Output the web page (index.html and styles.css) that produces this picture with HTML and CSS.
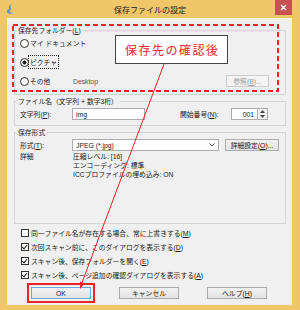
FILE: index.html
```html
<!DOCTYPE html>
<html lang="ja">
<head>
    <meta charset="UTF-8">
    <title>保存ファイルの設定</title>
    <link rel="stylesheet" href="styles.css">
</head>
<body>
    <div class="window">
        <div class="titlebar">
            <svg class="app-icon" width="9" height="11" viewBox="0 0 9 11">
                <path d="M5 0 C3 2 2 3 3.5 4.5 C1.5 5.5 0.5 7 1 8.5 C3 10.5 6 10 8.5 9.5 C6 9 3.5 8.5 3.5 7 C4 6 6 5.5 5 4 C4 3 5 1.5 5 0 Z" fill="#6f8fb8"/>
                <path d="M5 9 C6.5 9.3 7.5 9.3 8.5 9.5" stroke="#b9cbe2" stroke-width="1" fill="none"/>
            </svg>
            <div class="title">保存ファイルの設定</div>
            <div class="close">
                <svg width="7" height="7" viewBox="0 0 7 7"><path d="M1 1 L6 6 M6 1 L1 6" stroke="#fff" stroke-width="1.4"/></svg>
            </div>
        </div>

        <div class="client">
            <div class="group g-folder">
                <div class="group-title">保存先フォルダー(<u>L</u>)</div>
                <div class="opts">
                    <div class="opt"><span class="radio"></span>マイ ドキュメント</div>
                    <div class="opt"><span class="radio on"></span><span class="focus">ピクチャ</span></div>
                    <div class="opt">
                        <span class="radio"></span>
                        <span class="opt-label">その他</span>
                        <span class="path">Desktop</span>
                        <span class="btn btn-browse disabled">参照(<u>B</u>)...</span>
                    </div>
                </div>
            </div>

            <div class="group g-name">
                <div class="group-title">ファイル名（文字列 + 数字3桁）</div>
                <div class="row">
                    <span class="lbl">文字列(<u>P</u>):</span>
                    <span class="field field-text">img</span>
                    <span class="lbl lbl-start">開始番号(<u>N</u>):</span>
                    <span class="field field-num">001</span>
                    <span class="spin">
                        <svg width="5" height="3" viewBox="0 0 5 3"><path d="M2.5 0 L5 3 L0 3 Z" fill="#444"/></svg>
                        <svg width="5" height="3" viewBox="0 0 5 3"><path d="M0 0 L5 0 L2.5 3 Z" fill="#444"/></svg>
                    </span>
                </div>
            </div>

            <div class="group g-format">
                <div class="group-title">保存形式</div>
                <div class="row">
                    <span class="lbl">形式(<u>T</u>):</span>
                    <span class="field field-select">JPEG (*.jpg)
                        <svg width="6" height="4" viewBox="0 0 6 4"><path d="M0.5 0.5 L3 3 L5.5 0.5" stroke="#444" stroke-width="1" fill="none"/></svg>
                    </span>
                    <span class="btn btn-detail">詳細設定(<u>O</u>)...</span>
                </div>
                <div class="details">
                    <span class="lbl">詳細</span>
                    <div class="detail-lines">
                        <div>圧縮レベル: [16]</div>
                        <div>エンコーディング: 標準</div>
                        <div>ICCプロファイルの埋め込み: ON</div>
                    </div>
                </div>
            </div>

            <div class="checks">
                <div class="check"><span class="chk"></span>同一ファイル名が存在する場合、常に上書きする(<u>M</u>)</div>
                <div class="check"><span class="chk on"></span>次回スキャン前に、このダイアログを表示する(<u>D</u>)</div>
                <div class="check"><span class="chk on"></span>スキャン後、保存フォルダーを開く(<u>E</u>)</div>
                <div class="check"><span class="chk on"></span>スキャン後、ページ追加の確認ダイアログを表示する(<u>A</u>)</div>
            </div>

            <div class="buttons">
                <span class="btn btn-main default">OK</span>
                <span class="btn btn-main">キャンセル</span>
                <span class="btn btn-main">ヘルプ(<u>H</u>)</span>
            </div>
        </div>

        <svg class="overlay" width="300" height="310" viewBox="0 0 300 310">
            <rect x="13" y="25" width="265" height="66" fill="none" stroke="#e8262a" stroke-width="2" stroke-dasharray="5 3"/>
            <line x1="164" y1="64" x2="81.5" y2="284" stroke="#e8262a" stroke-width="1"/>
            <polygon points="80,289 84.8,283.3 80.1,281.6" fill="#e8262a"/>
        </svg>
        <div class="callout">保存先の確認後</div>
    </div>
</body>
</html>
```

FILE: styles.css
```css
body {
    margin: 0;
    font-family: "Liberation Sans", "Noto Sans CJK JP", sans-serif;
    font-size: 6.8px;
    color: #1a1a1a;
}
u {
    text-decoration: underline;
}
.window {
    width: 300px;
    height: 310px;
    background: #efc768;
    position: relative;
    display: flex;
    flex-direction: column;
    overflow: hidden;
}
.titlebar {
    height: 18px;
    display: grid;
    grid-template-columns: 1fr auto 1fr;
    align-items: center;
}
.app-icon {
    margin-left: 6px;
}
.title {
    font-family: "Noto Sans CJK JP", sans-serif;
    font-size: 8px;
    color: #222;
}
.close {
    justify-self: end;
    align-self: start;
    width: 17px;
    height: 15px;
    margin-right: 8px;
    background: #c75050;
    display: flex;
    align-items: center;
    justify-content: center;
}
.client {
    flex: 1;
    margin: 0 8px 5px 7px;
    background: #f0f0f0;
    padding: 12px 6px 0 7px;
}
.group {
    border: 1px solid #d5d5d5;
    padding: 0 5px;
}
.group-title {
    margin: -5px 0 0 -4px;
    padding: 0 2px;
    line-height: 9px;
    background: #f0f0f0;
    width: fit-content;
}
.opts {
    display: flex;
    flex-direction: column;
    gap: 7px;
    margin-top: 2px;
    padding-bottom: 7px;
}
.opt {
    display: flex;
    align-items: center;
    height: 12px;
}
.radio {
    width: 9px;
    height: 9px;
    border: 1px solid #333;
    border-radius: 50%;
    background: #fff;
    box-sizing: border-box;
    margin-right: 1px;
    flex: none;
}
.radio.on {
    background: radial-gradient(circle, #222 0 1.8px, #fff 2.3px);
}
.focus {
    outline: 1px dotted #222;
    outline-offset: 1px;
}
.opt-label {
    width: 43px;
}
.path {
    flex: 1;
    color: #555;
}
.btn {
    display: flex;
    align-items: center;
    justify-content: center;
    box-sizing: border-box;
    border: 1px solid #acacac;
    background: linear-gradient(#f2f2f2, #e3e3e3);
    height: 12px;
    white-space: nowrap;
}
.btn.disabled {
    border-color: #cdcdcd;
    background: #f4f4f4;
    color: #9a9a9a;
}
.btn-browse {
    width: 43px;
    margin-right: 11px;
}
.g-name {
    margin-top: 6px;
    padding-bottom: 5px;
}
.g-format {
    margin-top: 6px;
    height: 92px;
    box-sizing: border-box;
}
.row {
    display: flex;
    align-items: center;
    height: 12px;
    margin-top: 2px;
}
.lbl {
    width: 52px;
    flex: none;
}
.lbl-start {
    width: 51px;
    margin-left: 35px;
}
.field {
    height: 12px;
    box-sizing: border-box;
    border: 1px solid #abadb3;
    background: #fff;
    display: flex;
    align-items: center;
    padding: 0 3px;
}
.field-text {
    width: 73px;
}
.field-num {
    width: 27px;
    justify-content: flex-end;
}
.spin {
    width: 10px;
    height: 12px;
    box-sizing: border-box;
    border: 1px solid #abadb3;
    border-left: none;
    background: #f0f0f0;
    display: flex;
    flex-direction: column;
    align-items: center;
    justify-content: space-evenly;
}
.field-select {
    width: 147px;
    justify-content: space-between;
    padding-right: 3px;
}
.btn-detail {
    width: 54px;
    margin-left: 6px;
}
.details {
    display: flex;
    margin-top: 1px;
    line-height: 9px;
}
.detail-lines {
    padding-left: 1px;
}
.checks {
    margin-top: 2px;
}
.check {
    display: flex;
    align-items: center;
    height: 14px;
    padding-left: 7px;
}
.chk {
    width: 8px;
    height: 8px;
    box-sizing: border-box;
    border: 1px solid #333;
    background: #fff;
    margin-right: 2px;
    flex: none;
    position: relative;
}
.chk.on::after {
    content: "";
    position: absolute;
    left: 1px;
    top: 0;
    width: 2px;
    height: 4px;
    border: solid #222;
    border-width: 0 1.3px 1.3px 0;
    transform: rotate(40deg);
}
.buttons {
    display: flex;
    gap: 28px;
    padding-left: 17px;
    margin-top: 5px;
}
.btn-main {
    width: 60px;
}
.btn-main.default {
    border-color: #6ea7e0;
    outline: 2px solid #e8262a;
    outline-offset: 2px;
}
.overlay {
    position: absolute;
    top: 0;
    left: 0;
    pointer-events: none;
}
.callout {
    position: absolute;
    left: 115px;
    top: 35px;
    width: 113px;
    height: 29px;
    box-sizing: border-box;
    border: 1px solid #444;
    background: #fff;
    display: flex;
    align-items: center;
    justify-content: center;
    padding-left: 1.5px;
    font-family: "Noto Sans CJK JP", sans-serif;
    font-size: 12px;
    letter-spacing: 1.5px;
    color: #e8262a;
}
```
